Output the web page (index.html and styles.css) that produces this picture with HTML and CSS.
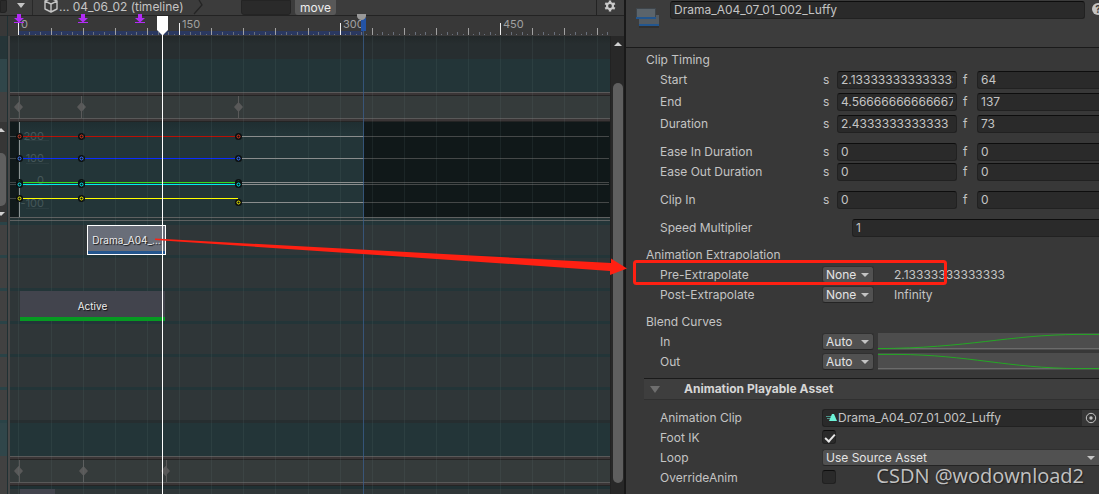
FILE: index.html
```html
<!DOCTYPE html>
<html lang="en">
<head>
<meta charset="utf-8">
<title>Timeline</title>
<link rel="stylesheet" href="styles.css">
</head>
<body>
<div class="app">
  <section class="timeline">
    <header class="toolbar">
      <span class="stub"></span>
      <button class="tool-menu" aria-label="Timeline list"><i class="caret"></i></button>
      <span class="crumb">
        <svg class="cube" width="16" height="13" viewBox="0 0 16 13" fill="none" stroke="#c4c4c4" stroke-width="1.4" stroke-linejoin="round"><path d="M8 -1.5 L14 1 V9 L8 12 L2 9 V1 Z M2 1.2 L8 4 L14 1.2 M8 4 V12"/></svg>
        <span>... 04_06_02 (timeline)</span>
      </span>
      <svg class="chevron" width="12" height="15" viewBox="0 0 12 15" fill="none" stroke="#242424" stroke-width="1.3"><path d="M1 14 L9 5 L6 0"/></svg>
      <span class="clip-field"></span>
      <button class="move">move</button>
      <button class="gear" aria-label="Settings">
        <svg width="12" height="12" viewBox="-6 -6 12 12"><g fill="#c9c9c9"><g id="teeth"><rect x="-1.2" y="-5.5" width="2.4" height="11"/><rect x="-1.2" y="-5.5" width="2.4" height="11" transform="rotate(60)"/><rect x="-1.2" y="-5.5" width="2.4" height="11" transform="rotate(120)"/></g><circle r="4"/></g><circle r="1.9" fill="#3c3c3c"/></svg>
      </button>
    </header>
    <div class="stage">
      <div class="gutter">
        <div class="g-ruler"></div><div class="g-dark"></div><div class="g-teal"></div><div class="g-keys"></div>
        <div class="g-scroll"><i class="tri-up"></i><i class="g-thumb"></i><i class="tri-down"></i></div>
        <div class="g-gap"></div>
        <div class="g-row"></div><div class="g-row"></div><div class="g-row"></div><div class="g-row"></div><div class="g-row"></div><div class="g-row"></div>
        <div class="g-teal"></div><div class="g-keys"></div><div class="g-row"></div>
      </div>
      <div class="splitter"></div>
      <div class="lanes">
        <svg class="ruler" id="ruler" shape-rendering="crispEdges"><rect x="9" y="15" width="344" height="4" fill="#2a3860"/></svg>
        <div class="lane lane-dark"></div>
        <div class="lane lane-teal"></div>
        <div class="keys"><svg class="key-svg"><g fill="#595959"><path d="M8.500 6l4.500 5-4.500 5-4.500-5zM71.500 6l4.500 5-4.500 5-4.500-5zM228.500 6l4.500 5-4.500 5-4.500-5z"/><path d="M9 0h1v22h-1zM71 0h1v22h-1zM228 0h1v22h-1z"/></g></svg></div>
        <svg class="curves" id="curves" shape-rendering="crispEdges">
          <rect width="9" height="95" fill="#111a1b"/>
          <rect x="354" width="100%" height="95" fill="#101819"/>
          <path d="M0 14.500H9M0 36.500H9M0 60.500H9M0 62.500H9M0 76.500H9" stroke="#414646"/>
          <path d="M16 18.500H39M16 41.500H39M16 63.500H39M16 86.500H39" stroke="#2c3d40"/>
          <g class="axis"><text x="34" y="18">200</text><text x="34" y="40">100</text><text x="34" y="62">0</text><text x="34" y="85">-100</text></g>
          <path d="M9.500 0V95" stroke="#8b9393"/>
          <path d="M228 14.500H354M228 36.500H354M228 60.500H354M228 62.500H354M228 80.500H354" stroke="#8a8d8d"/>
          <path d="M354 14.500H599M354 36.500H599M354 60.500H599M354 62.500H599M354 80.500H599" stroke="#454848"/>
          <path d="M9 14.500H228" stroke="#ba1005"/><path d="M9 36.500H228" stroke="#0b2cff"/><path d="M9 60.500H228" stroke="#36dc20"/><path d="M9 62.500H228" stroke="#00eeee"/><path d="M9 76.500H228" stroke="#ffff00"/>
        </svg>
        <div class="curve-foot"></div>
        <div class="lane row"><div class="clip clip-selected">Drama_A04_...</div></div>
        <div class="lane row"></div>
        <div class="lane row"><div class="clip clip-active">Active</div></div>
        <div class="lane row"></div>
        <div class="lane row"></div>
        <div class="lane row row-last"></div>
        <div class="lane lane-teal"></div>
        <div class="keys"><svg class="key-svg"><g fill="#595959"><path d="M8.500 6l4.500 5-4.500 5-4.500-5zM73.500 6l4.500 5-4.500 5-4.500-5zM155.500 6l4.500 5-4.500 5-4.500-5z"/><path d="M9 0h1v22h-1zM73 0h1v22h-1zM156 0h1v22h-1z"/></g></svg></div>
        <div class="lane-space"></div>
        <div class="lane row"><div class="clip clip-small"></div></div>
        <svg class="grid" id="grid" shape-rendering="crispEdges"></svg>
        <svg class="playhead">
          <g fill="#b12cf5"><path id="mk" d="M7 0h4v4h3l-5 4.500-5-4.500h3zM4 8h10v1h-10z"/><use href="#mk" x="64"/><use href="#mk" x="121"/></g>
          <rect x="351" y="4" width="5" height="13" fill="#2353a5"/>
          <path d="M347 0h9v2a4.500 4 0 0 1-9 0z" fill="#999"/>
          <path d="M353.500 17V494" stroke="#3b5f8d" stroke-opacity=".75"/>
          <path d="M147 2h11v14l-5 5h-1l-5-5z" fill="#fff"/>
          <path d="M152.500 18V494" stroke="#fff"/>
        </svg>
      </div>
      <div class="scrollbar"><i class="tri-up"></i><i class="thumb"></i></div>
    </div>
  </section>

  <section class="inspector">
    <header class="head">
      <svg class="clip-icon" width="24" height="21" viewBox="0 0 24 21"><rect x="3" y="7" width="20" height="9" fill="#535b62"/><rect x="3" y="16" width="20" height="2" fill="#22568f"/><rect x="3" y="18" width="20" height="2" fill="#303030"/><rect width="20" height="9" fill="#3e454b"/><rect x="1" y="1" width="18" height="8" fill="#5b646b"/><rect y="9" width="20" height="2" fill="#22568f"/></svg>
      <input class="field name" aria-label="Name" value="Drama_A04_07_01_002_Luffy">
      <button class="help" aria-label="Help">?</button>
    </header>
    <div class="props">
      <h2>Clip Timing</h2>
      <div class="prop time"><span>Start</span><label for="s1">s</label><input class="field" id="s1" value="2.13333333333333333"><label for="f1">f</label><input class="field open" id="f1" value="64"></div>
      <div class="prop time gap4"><span>End</span><label for="s2">s</label><input class="field" id="s2" value="4.56666666666667"><label for="f2">f</label><input class="field open" id="f2" value="137"></div>
      <div class="prop time gap4"><span>Duration</span><label for="s3">s</label><input class="field" id="s3" value="2.4333333333333"><label for="f3">f</label><input class="field open" id="f3" value="73"></div>
      <div class="prop time gap10"><span>Ease In Duration</span><label for="s4">s</label><input class="field" id="s4" value="0"><label for="f4">f</label><input class="field open" id="f4" value="0"></div>
      <div class="prop time"><span>Ease Out Duration</span><label for="s5">s</label><input class="field" id="s5" value="0"><label for="f5">f</label><input class="field open" id="f5" value="0"></div>
      <div class="prop time gap10"><span>Clip In</span><label for="s6">s</label><input class="field" id="s6" value="0"><label for="f6">f</label><input class="field open" id="f6" value="0"></div>
      <div class="prop speed gap10"><label for="speed">Speed Multiplier</label><input class="field open" id="speed" value="1"></div>

      <h2 class="group">Animation Extrapolation</h2>
      <div class="prop pick"><label for="pre">Pre-Extrapolate</label><span class="drop"><select id="pre"><option>None</option></select></span><output>2.13333333333333</output></div>
      <div class="prop pick"><label for="post">Post-Extrapolate</label><span class="drop"><select id="post"><option>None</option></select></span><output>Infinity</output></div>

      <h2 class="group">Blend Curves</h2>
      <div class="prop pick"><label for="in">In</label><span class="drop"><select id="in"><option>Auto</option></select></span><svg class="blend" viewBox="0 0 221 18" preserveAspectRatio="none"><path d="M0 16.500H221" stroke="#707070"/><path d="M0 16.500C90 16 130 2 200 1.500H221" fill="none" stroke="#22ab22"/></svg></div>
      <div class="prop pick"><label for="out">Out</label><span class="drop"><select id="out"><option>Auto</option></select></span><svg class="blend" viewBox="0 0 221 18" preserveAspectRatio="none"><path d="M0 16.500H221" stroke="#707070"/><path d="M0 1.500H20C90 2 130 16 200 16.500H221" fill="none" stroke="#22ab22"/></svg></div>
    </div>
    <h2 class="asset-head"><i class="fold"></i>Animation Playable Asset</h2>
    <div class="props asset">
      <div class="prop full"><label for="clip">Animation Clip</label><span class="object"><svg width="12" height="10" viewBox="0 0 12 10"><path d="M0 3h5v1h-5zM1 5h4v1h-4z" fill="#4b9488"/><path d="M6 1h2l3 7h-8z" fill="#6df3d8"/></svg><input id="clip" value="Drama_A04_07_01_002_Luffy"><button aria-label="Select clip"><svg width="12" height="12" viewBox="0 0 12 12"><circle cx="6" cy="6" r="4.700" fill="none" stroke="#c4c4c4"/><circle cx="6" cy="6" r="1.700" fill="#c4c4c4"/></svg></button></span></div>
      <div class="prop full"><label for="foot">Foot IK</label><input type="checkbox" id="foot" checked></div>
      <div class="prop full"><label for="loop">Loop</label><span class="drop wide"><select id="loop"><option>Use Source Asset</option></select></span></div>
      <div class="prop full"><label for="over">OverrideAnim</label><input type="checkbox" id="over"></div>
    </div>
  </section>

  <svg class="markup"><path d="M155 238.500L611 263V258.500L627 268.500L610 275V271L540 266L200 243L155 240Z" fill="#ff2012"/><rect x="634.500" y="261.500" width="311" height="22" rx="2" fill="none" stroke="#ff2012" stroke-width="3"/></svg>
  <div class="watermark">CSDN @wodownload2</div>
</div>
<script src="timeline.js"></script>
</body>
</html>
```

FILE: styles.css
```css
* { box-sizing: border-box; }
body { margin: 0; background: #383838; color: #c4c4c4; font: 12px/18px Inter, "Liberation Sans", sans-serif; }
button, input, select { font: inherit; color: inherit; margin: 0; padding: 0; border: 0; background: none; }
h2 { margin: 0; font-size: 12px; line-height: 20px; font-weight: 400; }
i { display: block; }

.app { position: relative; height: 100vh; overflow: hidden; display: grid; grid-template-columns: 626fr 473fr; }

/* timeline */
.timeline { min-width: 0; display: flex; flex-direction: column; border-right: 2px solid #191919; }
.toolbar { flex: none; height: 16px; display: flex; align-items: flex-start; background: #3c3c3c; border-bottom: 1px solid #232323; }
.stub { width: 7px; height: 13px; background: #2a2a2a; border-radius: 0 0 3px 0; border: 1px solid #222; }
.tool-menu { display: flex; align-items: flex-start; width: 26px; height: 15px; border-right: 1px solid #292929; padding: 3px 0 0 10px; }
.caret { width: 8px; border: 4px solid transparent; border-top: 5px solid #c4c4c4; border-bottom: 0; }
.crumb { display: flex; align-items: flex-start; margin-left: 10px; line-height: 14px; white-space: nowrap; width: 150px; }
.chevron { margin-right: 36px; }
.clip-field { width: 50px; height: 15px; background: #2a2a2a; border: 1px solid #242424; border-radius: 0 0 3px 3px; }
.move { margin-left: 4px; width: 41px; height: 15px; line-height: 13px; background: #585858; color: #eee; border-radius: 0 0 3px 3px; }
.gear { margin-left: auto; width: 28px; height: 15px; border-left: 1px solid #232323; text-align: center; line-height: 0; padding: 0 1px 4px 0; }

.stage { flex: 1; min-height: 0; display: grid; grid-template-columns: 8px 2px 1fr 14px; }
.splitter { background: #484848; margin-top: 20px; }
.gutter { border-right: 1px solid #203033; background: #414141; }
.g-ruler { height: 20px; background: #383838; }
.g-dark { height: 23px; background: #263538; }
.g-teal { height: 33px; background: #30464a; }
.g-keys { height: 30px; }
.g-scroll { height: 100px; background: #363636; padding-top: 6px; }
.gutter .tri-up, .gutter .tri-down { margin-left: -3px; }
.g-thumb { height: 53px; width: 6px; margin: 21px 0 6px; background: #5f5f5f; border-radius: 0 5px 5px 0; }
.g-gap { height: 3px; background: #2a4347; }
.g-row { height: 33px; border-bottom: 3px solid #2a4347; }
.tri-up { width: 8px; border: 4px solid transparent; border-bottom-color: #d0d0d0; border-top: 0; }
.tri-down { width: 8px; border: 4px solid transparent; border-top-color: #d0d0d0; border-bottom: 0; }

.lanes { position: relative; min-width: 0; }
.lanes svg { display: block; }
.ruler { width: 100%; height: 20px; background: #383838; }
.ruler text { font-size: 11px; fill: #a0a0a0; }
.lane { position: relative; }
.lane-dark { height: 23px; background: linear-gradient(#222829, #272e30 8px); }
.lane-teal { height: 33px; background: #233538; }
.keys { height: 30px; padding: 4px 0; background: linear-gradient(#595959 1px, #3a3536 1px 3px, #242424 3px 4px, #353b3b 4px 26px, #595959 26px 27px, #3a3536 27px 29px, #242424 29px); }
.key-svg { width: 100%; height: 22px; }
.curves { width: 100%; height: 95px; background: linear-gradient(#1f2e31, #233538 12px); }
.axis text { font-size: 11px; fill: #455759; text-anchor: end; }
.curve-foot { height: 8px; background: linear-gradient(#5f6161 1px, #233234 1px 3px, #5f6161 3px 4px, #233538 4px); }
.row { height: 33px; background: #2f3638; border-bottom: 3px solid #233538; }
.row-last { border-bottom-color: #262e30; }
.lane-space { height: 3px; background: #203033; }
.clip { position: absolute; z-index: 2; top: 0; height: 30px; font-size: 10px; line-height: 30px; color: #eee; text-align: center; text-shadow: 1px 1px 1px #111; white-space: nowrap; overflow: hidden; }
.clip-selected { left: 77px; width: 79px; line-height: 28px; border: 1px solid #fff; background: linear-gradient(#696e79 25px, #24568e 25px); }
.clip-active { left: 10px; width: 145px; background: #42444d; border-bottom: 4px solid #069a22; }
.clip-small { left: 10px; width: 35px; background: #42444d; }
.grid { position: absolute; top: 20px; left: 0; width: 100%; height: 100%; z-index: 1; }
.playhead { position: absolute; top: -2px; left: 0; width: 100%; height: 100%; z-index: 3; overflow: visible; }

.scrollbar { margin-top: 20px; background: #282828; border-left: 1px solid #222; padding: 6px 1px 0 2px; }
.scrollbar .tri-up { margin-left: 1px; }
.thumb { width: 10px; height: 400px; margin-top: 37px; border-radius: 5px; background: #5f5f5f; }

/* inspector */
.inspector { min-width: 0; overflow: hidden; }
.head { height: 48px; display: flex; align-items: flex-start; background: #3c3c3c; border-bottom: 1px solid #1a1a1a; padding: 1px 0 0 10px; }
.clip-icon { margin: 7px 10px 0 0; flex: none; }
.field { min-width: 0; width: 100%; height: 18px; padding: 0 3px; background: #2a2a2a; border: 1px solid #212121; border-top-color: #0d0d0d; border-radius: 3px; }
.field.open { border-right: 0; border-radius: 3px 0 0 3px; }
.name { flex: 1; }
.help { flex: none; width: 12px; height: 12px; margin: 2px -5px 0 7px; border-radius: 6px; background: #c4c4c4; color: #3c3c3c; font-size: 10px; line-height: 12px; font-weight: 700; }
.props { padding: 2px 0 0 20px; }
.props h2 { height: 21px; }
.prop { display: grid; align-items: center; height: 18px; margin: 0 0 2px 14px; }
.prop.gap4 { margin-top: 4px; }
.prop.gap10 { margin-top: 10px; }
.time { grid-template-columns: 163px 14px 120px 20px 1fr; }
.time .field + label { padding-left: 6px; }
.speed { grid-template-columns: 192px 1fr; }
.pick { grid-template-columns: 162px 52px 1fr; }
.pick output { padding-left: 20px; }
.blend { width: 100%; height: 17px; padding-left: 4px; align-self: start; background: #4d4d4d content-box; }
.full { grid-template-columns: 162px 1fr; }
.props .group { margin-top: 8px; }
.drop { position: relative; display: block; align-self: start; height: 17px; background: #515151; border: 1px solid #303030; border-bottom-color: #242424; border-radius: 3px; }
.drop::after { content: ""; position: absolute; right: 4px; top: 6px; border: 4px solid transparent; border-top-color: #c4c4c4; border-bottom: 0; pointer-events: none; }
.drop select { display: block; appearance: none; width: 100%; height: 15px; line-height: 15px; padding-left: 3px; color: #e4e4e4; }
.wide { border-right: 0; border-radius: 3px 0 0 3px; }
.asset-head { display: flex; align-items: center; height: 22px; margin: 7px 0 0 18px; background: #3e3e3e; border-top: 1px solid #1a1a1a; border-bottom: 1px solid #303030; font-weight: 700; color: #d6d6d6; }
.fold { border: 5px solid transparent; border-top: 7px solid #6e6e6e; border-bottom: 0; margin: 0 24px 0 6px; }
.asset { padding-top: 9px; }
.object { display: flex; align-items: center; height: 18px; background: #2a2a2a; border: 1px solid #212121; border-right: 0; border-radius: 3px 0 0 3px; padding-left: 3px; }
.object input { flex: 1; min-width: 0; height: 16px; }
.object button { width: 17px; height: 16px; background: #373737; line-height: 0; }
input[type="checkbox"] { appearance: none; position: relative; align-self: start; width: 14px; height: 14px; margin-top: 1px; background: #2a2a2a; border: 1px solid #212121; border-top-color: #0d0d0d; border-radius: 3px; }
input[type="checkbox"]:checked::after { content: ""; position: absolute; left: 4px; top: 1px; width: 4px; height: 8px; border: solid #e8e8e8; border-width: 0 2px 2px 0; transform: rotate(42deg); }

.markup { position: absolute; inset: 0; width: 100%; height: 100%; z-index: 5; pointer-events: none; }
.watermark { position: absolute; right: 15px; bottom: 4px; z-index: 6; font: 20px/28px "Open Sans", "Noto Sans", sans-serif; color: #c2c2c2; text-shadow: 1px 1px 1px #222; pointer-events: none; }
```

FILE: timeline.js
```js
const NS = "http://www.w3.org/2000/svg";
function add(parent, name, attrs, text) {
  const el = document.createElementNS(NS, name);
  for (const key in attrs) el.setAttribute(key, attrs[key]);
  if (text !== undefined) el.textContent = text;
  parent.appendChild(el);
}

const ruler = document.getElementById("ruler");
const grid = document.getElementById("grid");
const step = 32.12 / 6;
for (let i = 0; i < 111; i++) {
  const x = Math.round(8.45 + i * step);
  const major = i % 30 === 0;
  const mid = i % 6 === 0;
  const height = major ? 12 : mid ? 7 : i % 2 ? 1 : 3;
  const y = i % 2 && !mid ? 18 : 19 - height;
  add(ruler, "rect", { x, y, width: 1, height, fill: major ? "#eee" : mid ? "#a0a0a0" : "#69707c" });
  if (major) add(ruler, "text", { x: x + 3, y: 12 }, i * 5);
  if (mid) add(grid, "rect", { x, y: 0, width: 1, height: "100%", fill: "rgba(120,150,150,.11)" });
}

const curves = document.getElementById("curves");
const keys = [
  ["#d83a20", [14, 14, 14]],
  ["#3f78ff", [36, 36, 36]],
  ["#2a7a20", [60, 60, 60]],
  ["#00eeee", [62, 62, 62]],
  ["#f0f000", [76, 76, 80]]
];
for (const [color, ys] of keys) {
  [9, 71, 228].forEach((x, i) => {
    add(curves, "circle", { cx: x + 0.5, cy: ys[i] + 0.5, r: 3.5, fill: "#0b0f10", "shape-rendering": "auto" });
    add(curves, "circle", { cx: x + 0.5, cy: ys[i] + 0.5, r: 1.5, fill: "#0b0f10", stroke: color, "shape-rendering": "auto" });
  });
}
```
